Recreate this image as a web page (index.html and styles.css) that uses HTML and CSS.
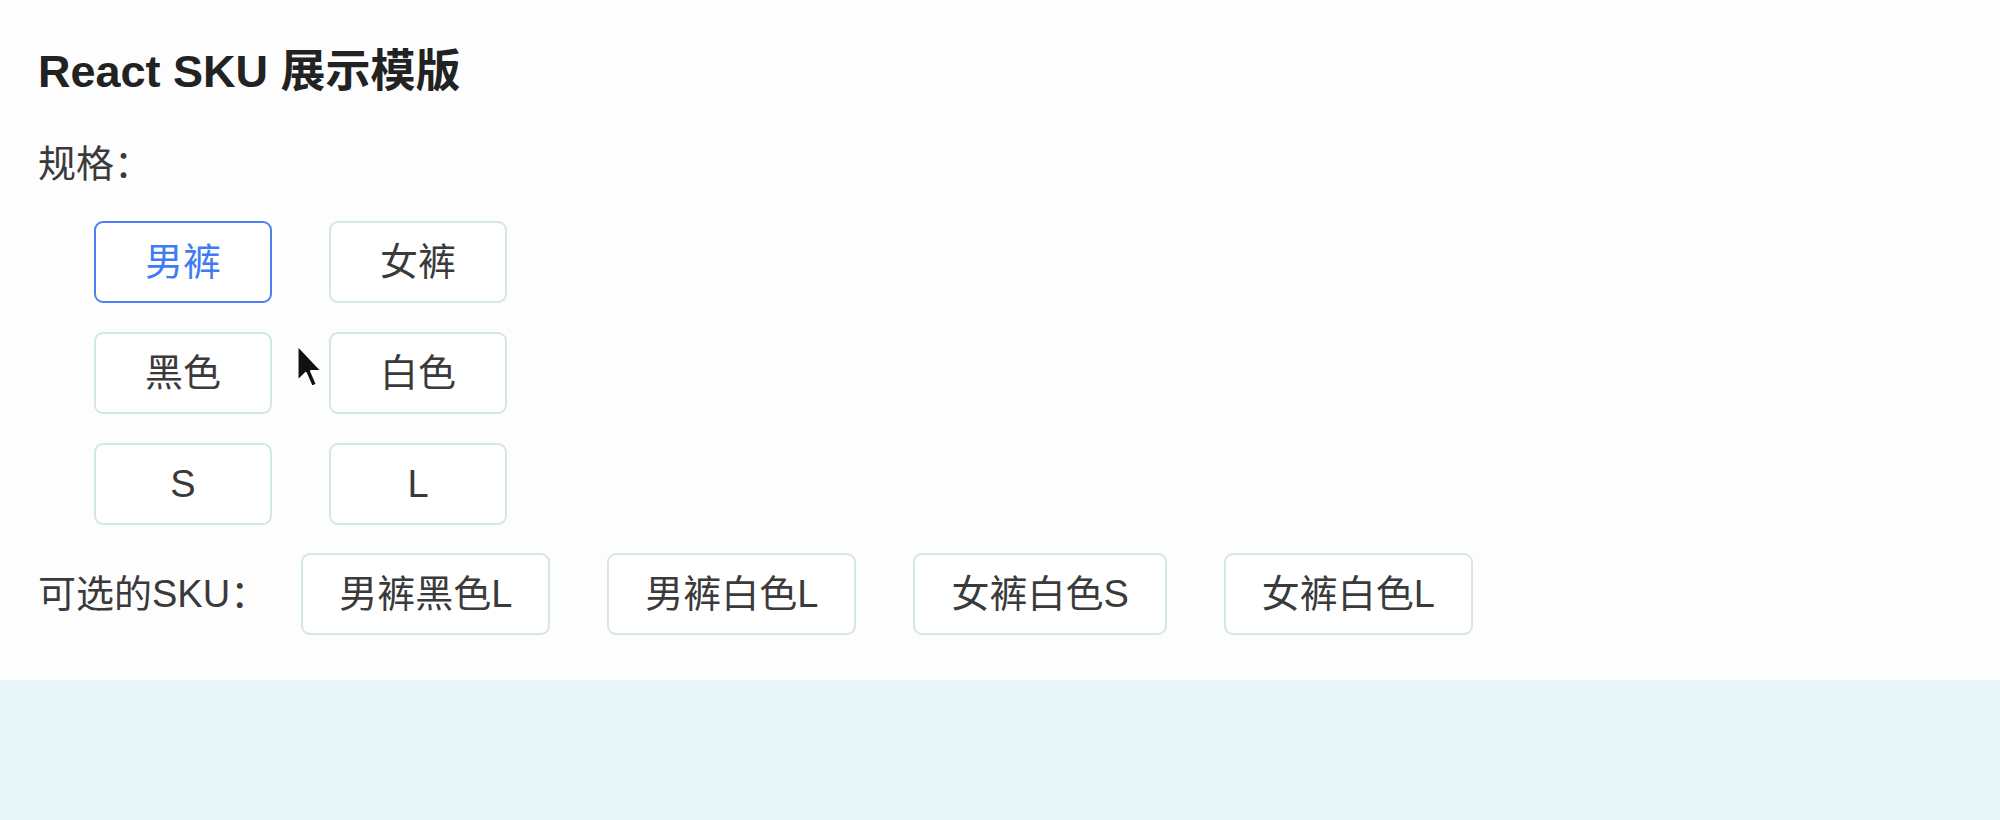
FILE: index.html
```html
<!DOCTYPE html>
<html lang="zh-CN">
<head>
    <meta charset="UTF-8">
    <meta name="viewport" content="width=device-width, initial-scale=1.0">
    <title>React SKU 展示模版</title>
    <link rel="stylesheet" href="styles.css">
</head>
<body>
    <div class="page">
        <h1 class="title">React SKU 展示模版</h1>
        <div class="label">规格：</div>
        <div class="spec-grid">
            <button class="spec-btn selected">男裤</button>
            <button class="spec-btn">女裤</button>
            <button class="spec-btn">黑色</button>
            <button class="spec-btn">白色</button>
            <button class="spec-btn">S</button>
            <button class="spec-btn">L</button>
        </div>
        <div class="sku-row">
            <span class="label sku-label">可选的SKU：</span>
            <button class="sku-btn">男裤黑色L</button>
            <button class="sku-btn">男裤白色L</button>
            <button class="sku-btn">女裤白色S</button>
            <button class="sku-btn">女裤白色L</button>
        </div>
        <!-- mouse pointer -->
        <svg class="pointer" width="28" height="46" viewBox="0 0 12 20">
            <path d="M1 1 L1 16.5 L4.6 13 L7.2 19 L9.4 18 L6.9 12.2 L11.6 12.2 Z" fill="#111" stroke="#fff" stroke-width="0.9" stroke-linejoin="round"/>
        </svg>
    </div>
    <div class="band"></div>
</body>
</html>
```

FILE: styles.css
```css
        html, body {
            margin: 0;
            height: 100%;
        }
        body {
            font-family: "Liberation Sans", "Noto Sans CJK SC", sans-serif;
            background-color: #fdfdfd;
            color: #333;
            display: flex;
            flex-direction: column;
        }
        .page {
            position: relative;
            flex: 0 0 680px;
            box-sizing: border-box;
            padding: 46px 38px 0 38px;
        }
        .title {
            margin: 0;
            font-size: 45px;
            line-height: 52px;
            font-weight: bold;
            color: #222;
        }
        .label {
            font-size: 38px;
            line-height: 52px;
            color: #3a3a3a;
        }
        .page > .label {
            margin-top: 40px;
        }
        .spec-grid {
            display: grid;
            grid-template-columns: 178px 178px;
            column-gap: 57px;
            row-gap: 29px;
            margin: 31px 0 0 56px;
        }
        .spec-btn, .sku-btn {
            font-family: inherit;
            font-size: 38px;
            color: #3a3a3a;
            background-color: #fff;
            border: 2px solid #d3e6e8;
            border-radius: 9px;
            height: 82px;
            line-height: 76px;
            box-sizing: border-box;
            cursor: pointer;
        }
        .spec-btn {
            width: 178px;
            padding: 0;
        }
        .spec-btn.selected {
            border-color: #4b7ff2;
            color: #3f7cf4;
        }
        .sku-row {
            display: flex;
            align-items: center;
            gap: 57px;
            margin-top: 28px;
        }
        .sku-label {
            margin-right: -24px;
        }
        .sku-btn {
            padding: 0 36px;
        }
        .pointer {
            position: absolute;
            left: 295px;
            top: 343px;
        }
        .band {
            flex: 1;
            background-color: #e9f7f9;
        }
```
